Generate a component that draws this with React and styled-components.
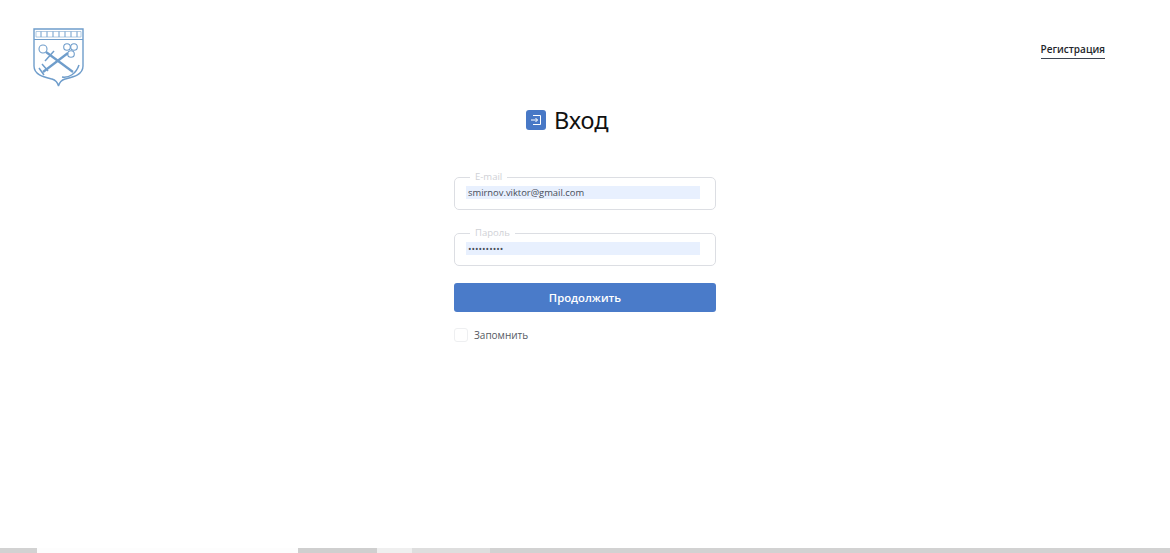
import React from 'react'
import styled, { createGlobalStyle } from 'styled-components'

const GlobalStyle = createGlobalStyle`
  html, body { margin: 0; padding: 0; height: 100%; background: #fff; }
  body { font-family: "Open Sans", "Noto Sans", sans-serif; overflow: hidden; }
`

const Page = styled.div`
  height: 553px;
  display: flex;
  flex-direction: column;
  overflow: hidden;
`

const Header = styled.header`
  height: 87px;
  flex: none;
  box-sizing: border-box;
  padding: 28px 65px 0 33px;
  display: flex;
  justify-content: space-between;
  align-items: flex-start;
`

const RegisterLink = styled.a`
  margin-top: 14px;
  padding-bottom: 1px;
  font-size: 10px;
  line-height: 15px;
  font-weight: 600;
  color: #23262c;
  border-bottom: 1px solid #3c4350;
  text-decoration: none;
`

const Main = styled.main`
  flex: 1;
  display: flex;
  justify-content: center;
`

const Form = styled.form`
  width: 262px;
  display: flex;
  flex-direction: column;
`

const Title = styled.div`
  height: 85px;
  padding: 20px 0 0 72px;
  box-sizing: border-box;
  display: flex;
  align-items: flex-start;
  gap: 8px;
`

const TitleIcon = styled.span`
  width: 20px;
  height: 20px;
  margin-top: 3px;
  border-radius: 3px;
  background: #4878c6;
  display: flex;
  align-items: center;
  justify-content: center;
`

const TitleText = styled.h1`
  margin: 0;
  font-family: "Noto Sans", sans-serif;
  font-size: 23.5px;
  line-height: 26px;
  font-weight: 400;
  color: #111;
`

const Field = styled.fieldset`
  margin: 0 0 ${p => p.$gap}px;
  padding: 0 15px 0 11px;
  height: 38px;
  box-sizing: border-box;
  border: 1px solid #dcdee3;
  border-radius: 5px;
  min-width: 0;
`

const Legend = styled.legend`
  margin-left: 4px;
  padding: 0 5px;
  font-size: 9.5px;
  line-height: 10px;
  color: #cfd1d6;
`

const Input = styled.input`
  display: block;
  width: 100%;
  height: 13px;
  margin-top: 4px;
  box-sizing: border-box;
  border: 0;
  outline: 0;
  padding: 0 2px;
  background: #e8f0fe;
  font-family: inherit;
  font-size: 9.4px;
  color: #474d58;
`

const Submit = styled.button`
  height: 29px;
  border: 0;
  border-radius: 3px;
  background: #4a7bc9;
  color: #fff;
  font-family: inherit;
  font-size: 11.3px;
  font-weight: 600;
  padding: 0;
`

const Remember = styled.label`
  margin-top: 16px;
  display: flex;
  align-items: center;
  gap: 6px;
  font-size: 10px;
  line-height: 14px;
  color: #555a63;
`

const Box = styled.span`
  width: 12px;
  height: 12px;
  border: 1px solid #eeeff1;
  border-radius: 3px;
`

const BottomStrip = styled.div`
  height: 5px;
  flex: none;
  display: flex;
  background: #d2d2d2;
`

const StripPart = styled.div`
  width: ${p => p.$w}px;
  background: ${p => p.$color};
`

const Logo = () => (
  <svg width="51" height="59" viewBox="0 0 51 59" fill="none" stroke="#6f9dcb" strokeWidth="1.1">
    <path d="M1 1H50V38C50 47 40 49 32 51C28.500 52 26.500 54 25.500 58C24.500 54 22.500 52 19 51C11 49 1 47 1 38Z" strokeWidth="1.4" />
    <path d="M1 11.500H50" strokeWidth="1.2" />
    <path d="M3 3.500H48V9H3Z" strokeWidth="0.8" stroke="#9dbcdb" />
    <path d="M8 3.500V9M14 3.500V9M20 3.500V9M26 3.500V9M32 3.500V9M38 3.500V9M44 3.500V9" strokeWidth="1" />
    {/* anchor */}
    <circle cx="10" cy="21" r="4" />
    <path d="M13 24L40 44" strokeWidth="2.200" />
    <path d="M21 23L12 33" strokeWidth="1.500" />
    <path d="M29 49C36 50 43 46 46 37" strokeWidth="1.500" />
    {/* key */}
    <circle cx="34" cy="19" r="3.300" />
    <circle cx="41" cy="19" r="3.300" />
    <circle cx="38" cy="26" r="3.300" />
    <path d="M35 25L10 44" strokeWidth="2.200" />
    <path d="M9 36L15 43M6 40L11 47" strokeWidth="1.500" />
  </svg>
)

const EnterIcon = () => (
  <svg width="12" height="12" viewBox="0 0 12 12" fill="none" stroke="#fff" strokeWidth="1">
    <path d="M3 1.500H10.500V10.500H3" />
    <path d="M1 6H7.500M5.500 4L7.500 6L5.500 8" />
  </svg>
)

export default function App() {
  return (
    <Page>
      <GlobalStyle />
      <Header>
        <Logo />
        <RegisterLink href="#">Регистрация</RegisterLink>
      </Header>
      <Main>
        <Form onSubmit={e => e.preventDefault()}>
          <Title>
            <TitleIcon><EnterIcon /></TitleIcon>
            <TitleText>Вход</TitleText>
          </Title>
          <Field $gap={18}>
            <Legend>E-mail</Legend>
            <Input type="text" defaultValue="smirnov.viktor@gmail.com" />
          </Field>
          <Field $gap={17}>
            <Legend>Пароль</Legend>
            <Input type="password" defaultValue="1234567890" />
          </Field>
          <Submit type="submit">Продолжить</Submit>
          <Remember>
            <Box />
            Запомнить
          </Remember>
        </Form>
      </Main>
      <BottomStrip>
        <StripPart $w={37} $color="#d2d2d2" />
        <StripPart $w={261} $color="#fdfdfd" />
        <StripPart $w={79} $color="#cfcfcf" />
        <StripPart $w={35} $color="#efefef" />
        <StripPart $w={78} $color="#dedede" />
      </BottomStrip>
    </Page>
  )
}
